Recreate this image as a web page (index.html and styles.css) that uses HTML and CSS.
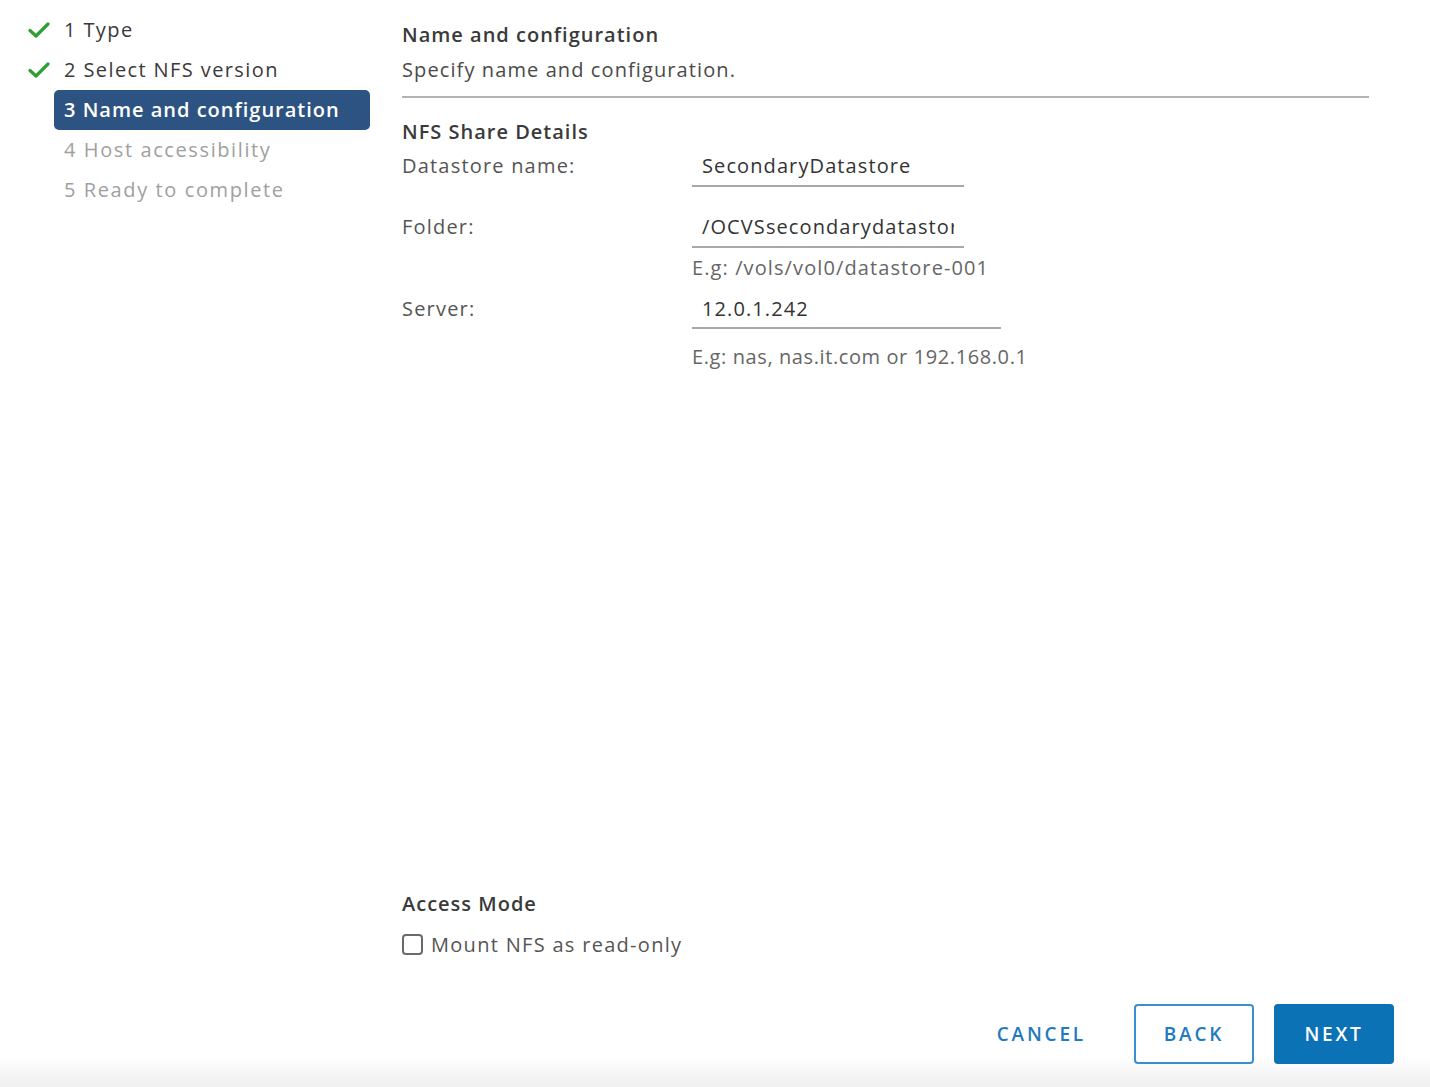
FILE: index.html
```html
<!DOCTYPE html>
<html lang="en">
<head>
    <meta charset="UTF-8">
    <meta name="viewport" content="width=device-width, initial-scale=1.0">
    <title>New Datastore</title>
    <link rel="stylesheet" href="styles.css">
</head>
<body>
    <div class="wizard">
        <div class="wizard-body">
            <ul class="steps">
                <li class="step done">
                    <span class="step-icon">
                        <svg width="22" height="18" viewBox="0 0 22 18"><path d="M2 9.5 L8 15 L20 3" fill="none" stroke="#2f9e35" stroke-width="3.2" stroke-linecap="round" stroke-linejoin="round"/></svg>
                    </span>
                    <span class="step-label">1 Type</span>
                </li>
                <li class="step done">
                    <span class="step-icon">
                        <svg width="22" height="18" viewBox="0 0 22 18"><path d="M2 9.5 L8 15 L20 3" fill="none" stroke="#2f9e35" stroke-width="3.2" stroke-linecap="round" stroke-linejoin="round"/></svg>
                    </span>
                    <span class="step-label">2 Select NFS version</span>
                </li>
                <li class="step active">
                    <span class="step-icon"></span>
                    <span class="step-label">3 Name and configuration</span>
                </li>
                <li class="step todo">
                    <span class="step-icon"></span>
                    <span class="step-label">4 Host accessibility</span>
                </li>
                <li class="step todo">
                    <span class="step-icon"></span>
                    <span class="step-label">5 Ready to complete</span>
                </li>
            </ul>

            <div class="page">
                <div class="page-header">
                    <h2>Name and configuration</h2>
                    <p>Specify name and configuration.</p>
                </div>

                <h3>NFS Share Details</h3>
                <div class="form">
                    <label class="form-label" for="ds-name">Datastore name:</label>
                    <div class="form-field">
                        <input type="text" id="ds-name" class="text-input" value="SecondaryDatastore">
                    </div>

                    <label class="form-label" for="folder">Folder:</label>
                    <div class="form-field with-hint">
                        <input type="text" id="folder" class="text-input" value="/OCVSsecondarydatastore">
                        <div class="hint">E.g: /vols/vol0/datastore-001</div>
                    </div>

                    <label class="form-label" for="server">Server:</label>
                    <div class="form-field">
                        <input type="text" id="server" class="text-input wide" value="12.0.1.242">
                        <div class="hint spaced">E.g: nas, nas.it.com or 192.168.0.1</div>
                    </div>
                </div>

                <div class="access">
                    <h3>Access Mode</h3>
                    <label class="check">
                        <input type="checkbox">
                        <span>Mount NFS as read-only</span>
                    </label>
                </div>
            </div>
        </div>

        <div class="footer">
            <button class="btn btn-link">Cancel</button>
            <button class="btn btn-outline">Back</button>
            <button class="btn btn-primary">Next</button>
        </div>
    </div>
</body>
</html>
```

FILE: styles.css
```css
html, body {
    height: 100%;
}
body {
    margin: 0;
    font-family: "Open Sans", "Noto Sans", sans-serif;
    font-size: 20px;
    letter-spacing: 1.1px;
    color: #444;
    background: #fff;
}
.wizard {
    height: 100%;
    display: flex;
    flex-direction: column;
}
.wizard-body {
    flex: 1;
    display: flex;
    min-height: 0;
}
.steps {
    list-style: none;
    margin: 0;
    padding: 10px 0 0 28px;
    width: 342px;
    flex-shrink: 0;
}
.step {
    display: flex;
    align-items: center;
    height: 40px;
}
.step-icon {
    width: 26px;
    display: flex;
    align-items: center;
}
.step-label {
    flex: 1;
    padding: 0 10px;
    height: 40px;
    line-height: 39px;
    border-radius: 5px;
    white-space: nowrap;
    letter-spacing: 1.4px;
}
.step.done .step-label {
    color: #3a3a3a;
    font-weight: 500;
}
.step.active .step-label {
    background: #2d5382;
    color: #fff;
    font-weight: 600;
    letter-spacing: 1px;
}
.step.todo .step-label {
    color: #a0a0a0;
    font-weight: 500;
    letter-spacing: 1.6px;
}
.page {
    flex: 1;
    display: flex;
    flex-direction: column;
    margin-left: 32px;
    padding-right: 61px;
}
.page-header {
    border-bottom: 2px solid #b3b3b3;
    padding-top: 20px;
    padding-bottom: 11px;
}
h2, h3 {
    margin: 0;
    font-size: 20px;
    font-weight: 600;
    letter-spacing: 1px;
    color: #3a3a3a;
}
h2 {
    line-height: 30px;
}
.page-header p {
    margin: 5px 0 0;
    line-height: 30px;
    color: #4a4a4a;
}
.page > h3 {
    margin-top: 20px;
    line-height: 28px;
}
.form {
    display: grid;
    grid-template-columns: 290px 1fr;
}
.form-label {
    color: #555;
    line-height: 40px;
    letter-spacing: 1.2px;
}
.form-field {
    display: flex;
    flex-direction: column;
    align-items: flex-start;
    padding-bottom: 20px;
}
.form-field.with-hint {
    padding-bottom: 10px;
}
.text-input {
    box-sizing: border-box;
    width: 272px;
    height: 41px;
    padding: 0 10px;
    border: none;
    border-bottom: 2px solid #a8a8a8;
    font-family: inherit;
    font-size: 20px;
    letter-spacing: 1.1px;
    color: #333;
    background: transparent;
    outline: none;
}
.text-input.wide {
    width: 309px;
    height: 40px;
}
.hint {
    margin-top: 9px;
    line-height: 22px;
    letter-spacing: 1.1px;
    color: #666;
}
.hint.spaced {
    margin-top: 17px;
    letter-spacing: 0.6px;
}
.access {
    margin-top: auto;
    padding-bottom: 28px;
}
.access h3 {
    line-height: 30px;
}
.check {
    display: flex;
    align-items: center;
    gap: 8px;
    margin-top: 12px;
    color: #555;
    letter-spacing: 1.3px;
}
.check input {
    appearance: none;
    -webkit-appearance: none;
    margin: 0;
    width: 21px;
    height: 21px;
    border: 2px solid #6a6a6a;
    border-radius: 4px;
    background: #fff;
}
.footer {
    display: flex;
    justify-content: flex-end;
    align-items: center;
    gap: 20px;
    padding: 18px 36px 23px;
    background: linear-gradient(to bottom, #fff 70%, #efefef);
}
.btn {
    height: 60px;
    min-width: 120px;
    padding: 0 24px;
    border-radius: 4px;
    font-family: inherit;
    font-size: 19px;
    font-weight: 600;
    letter-spacing: 2.8px;
    text-transform: uppercase;
    cursor: pointer;
}
.btn-link {
    background: none;
    border: none;
    color: #1f7bbf;
    margin-right: 4px;
}
.btn-outline {
    background: #fff;
    border: 2px solid #3b8fd0;
    color: #1f7bbf;
}
.btn-primary {
    background: #0b72b5;
    border: 2px solid #0b72b5;
    color: #fff;
}
```
